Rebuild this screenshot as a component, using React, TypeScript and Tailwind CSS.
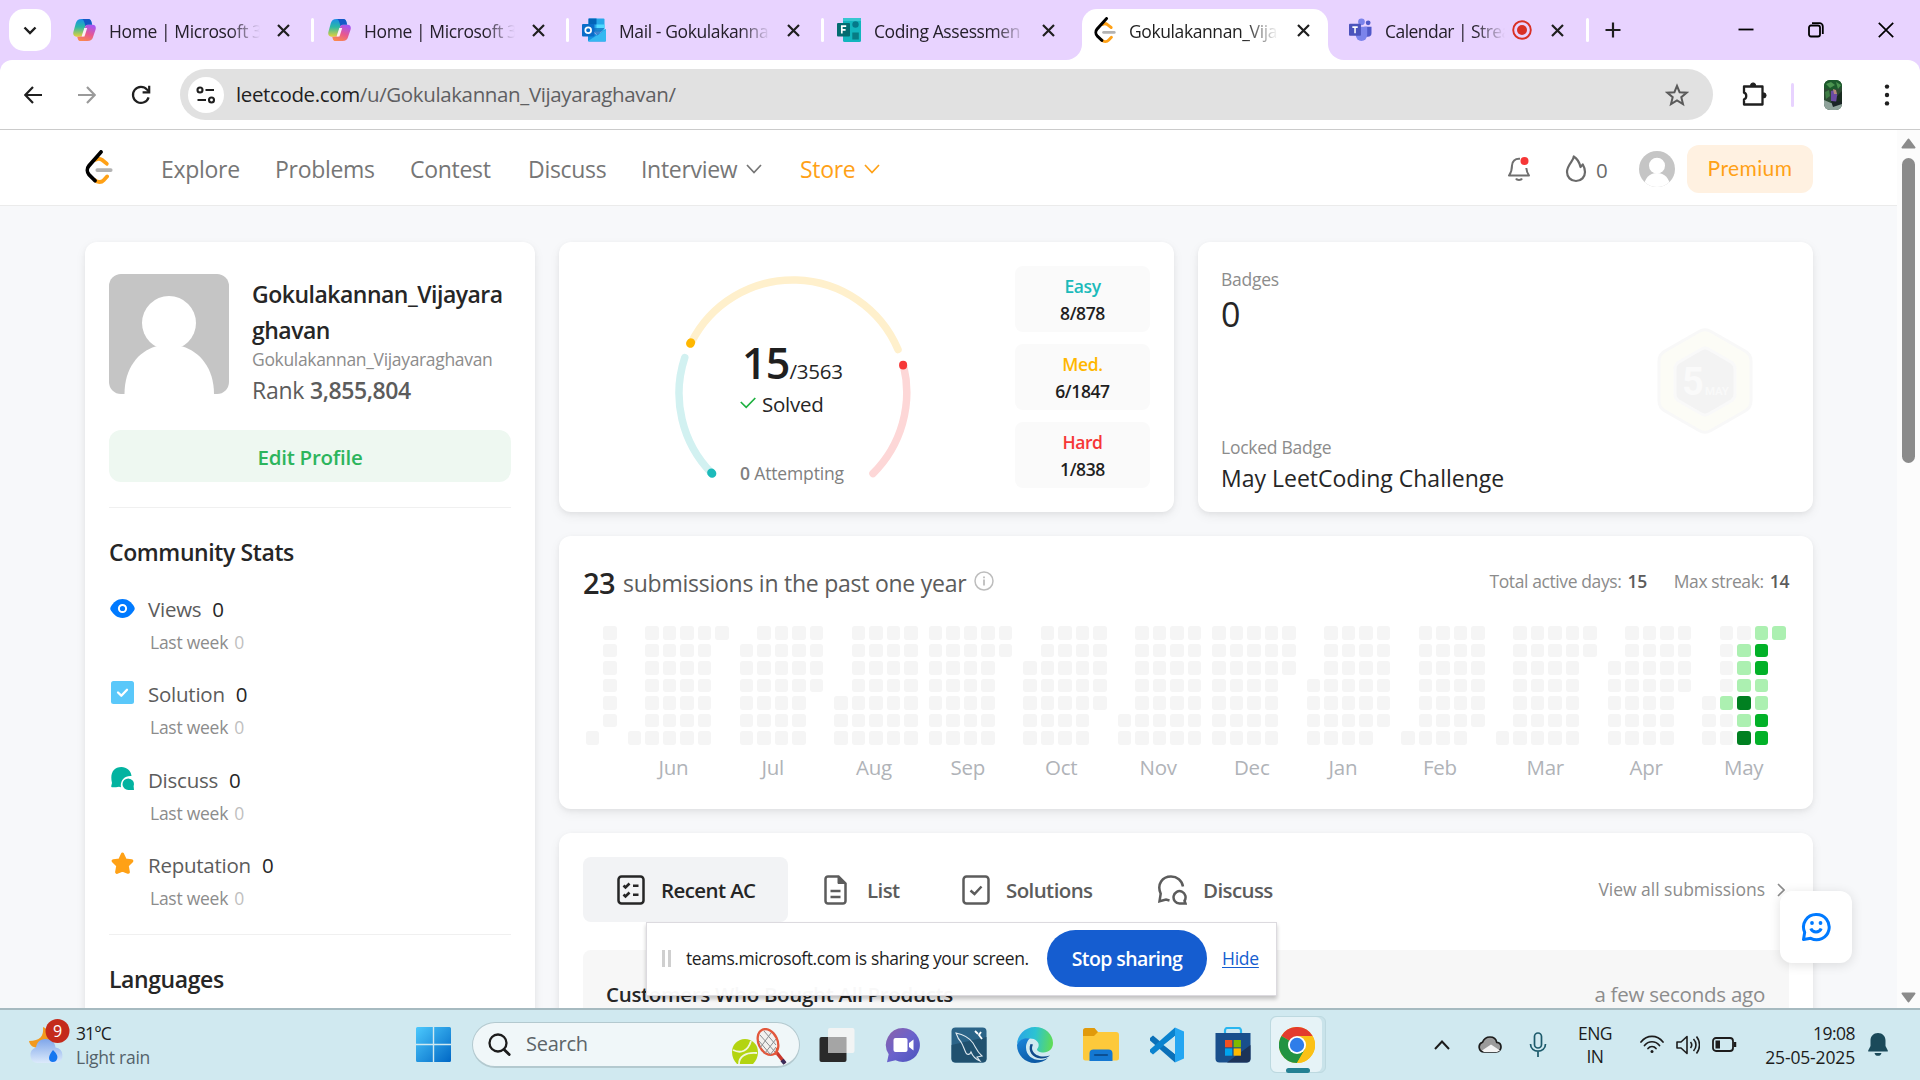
import React from 'react';

/* ---------- browser icons ---------- */

function CopilotIcon({ id }: { id: string }) {
  return (
    <svg viewBox="0 0 24 24" className="h-6 w-[23px] shrink-0">
      <defs>
        <linearGradient id={id + 'a'} x1="0" y1="0" x2="0" y2="1">
          <stop offset="0" stopColor="#1a8fe8" />
          <stop offset="0.45" stopColor="#2bb8a5" />
          <stop offset="1" stopColor="#e5d13a" />
        </linearGradient>
        <linearGradient id={id + 'b'} x1="0.6" y1="0" x2="0.2" y2="1">
          <stop offset="0" stopColor="#a855f0" />
          <stop offset="0.5" stopColor="#e8588f" />
          <stop offset="1" stopColor="#fb8b4a" />
        </linearGradient>
      </defs>
      <path d="M9 0.5h7.2c1.6 0 2.4 1 2.8 2.4l1 3.6h-4.300c-1.800 0-2.700 1-3.200 2.700L9.900 17c-.5 1.500-1.300 2-2.700 2H3.500C.6 19-.2 16.500.4 14L2.900 5C3.800 2 5.500.5 9 .5z" fill={`url(#${id}a)`} />
      <path d="M16.200.5c1.600 0 2.400 1 2.800 2.400l1 3.600h-4.300c-1.400 0-2.200.6-2.700 1.600L12 4.500C11.300 2 10.500.5 9 .5z" fill="#1558c7" />
      <path d="M15 23.500H7.900c-1.600 0-2.500-1-2.900-2.400L4.400 19h2.800c1.500 0 2.200-.6 2.700-2l2.700-8.200c.5-1.500 1.300-2.300 3-2.300h5c2.900 0 3.600 2.500 3 5L21 19c-.9 3-2.500 4.500-6 4.500z" fill={`url(#${id}b)`} />
      <path d="M11.800 10l3-.2-2.800 9-3.100.2z" fill="#fff" opacity=".9" />
    </svg>
  );
}

function OutlookIcon() {
  return (
    <svg viewBox="0 0 24 24" className="h-6 w-6 shrink-0">
      <rect x="6.5" y="0.5" width="16" height="13" rx="1" fill="#28a8ea" />
      <rect x="6.5" y="0.5" width="8" height="6" fill="#0364b8" />
      <rect x="14.5" y="6.5" width="8" height="6" fill="#50d9ff" />
      <path d="M6 11l9 6 9-6v11.500a1 1 0 0 1-1 1H7a1 1 0 0 1-1-1z" fill="#1490df" />
      <path d="M6 23l18-11.500V22.500a1 1 0 0 1-1 1H7z" fill="#35b8f1" />
      <path d="M12 14l3.500 3.500L22 11v-1H12z" fill="#1272c4" opacity=".8" />
      <rect x="0" y="6" width="12.5" height="12.5" rx="1" fill="#0a6cc9" />
      <circle cx="6.2" cy="12.2" r="2.9" fill="none" stroke="#fff" strokeWidth="1.7" />
    </svg>
  );
}

function FormsIcon() {
  return (
    <svg viewBox="0 0 24 24" className="h-6 w-6 shrink-0">
      <rect x="6" y="0" width="18" height="24" rx="1.5" fill="#12b5bd" />
      <rect x="6" y="0" width="18" height="3" fill="#37c6d0" />
      <circle cx="18.5" cy="6.5" r="3.2" fill="#05798a" />
      <rect x="15.3" y="14.5" width="6.5" height="7" fill="#077c84" />
      <rect x="0" y="5" width="13" height="13.5" rx="1" fill="#036c70" />
      <path d="M4.800 15.500V8.200h4.400M4.800 11.900h3.800" fill="none" stroke="#fff" strokeWidth="1.7" />
    </svg>
  );
}

function TeamsIcon() {
  return (
    <svg viewBox="0 0 24 24" className="h-6 w-[23px] shrink-0">
      <circle cx="20" cy="4.5" r="2.5" fill="#5059c9" />
      <path d="M16 8.500h7.500V15a4 4 0 0 1-4 4H17z" fill="#5059c9" />
      <circle cx="13" cy="3.5" r="3.5" fill="#7b83eb" />
      <path d="M7 8.500h12V17a6 6.500 0 0 1-12 0z" fill="#7b83eb" />
      <rect x="0" y="5.5" width="12.5" height="12.5" rx="1" fill="#4b53bc" />
      <path d="M3.500 9h5.600M6.300 9v6.300" stroke="#fff" strokeWidth="1.6" fill="none" />
    </svg>
  );
}

function LeetLogo({ className }: { className: string }) {
  return (
    <svg viewBox="1.5 0 21 24" preserveAspectRatio="none" className={className} fill="none" strokeWidth="2.75" strokeLinecap="round">
      <path d="M9.600 6.900c1.400-1 3.300-.9 4.700.1l3.600 2.700" stroke="#ffa116" />
      <path d="M10.700 14.200h10.100" stroke="#b3b3b3" />
      <path d="M9 21.300c1.900 1.800 4.800 1.700 6.600-.1l2.500-2.500" stroke="#ffa116" />
      <path d="M13.500 1.400L4.400 11.200c-1.600 1.800-1.500 4.500.1 6.200l4.500 4.200" stroke="#000" />
    </svg>
  );
}

function Close() {
  return (
    <svg viewBox="0 0 15 15" className="h-[15px] w-[15px] shrink-0" stroke="#1f1f1f" strokeWidth="2.2" fill="none">
      <path d="M2 2l11 11M13 2L2 13" />
    </svg>
  );
}

function Tab({ icon, title, sep = true }: { icon: React.ReactNode; title: string; sep?: boolean }) {
  return (
    <div className="flex h-[60px] w-[255px] shrink-0 items-center pl-3.5">
      <div className="flex w-[22px] shrink-0 justify-center">{icon}</div>
      <div className="ml-[14px] w-[151px] shrink-0 whitespace-nowrap pt-[2px] text-[17.5px] tracking-[-0.4px] text-[#25202b] [mask-image:linear-gradient(to_right,black_80%,transparent)]">
        {title}
      </div>
      <div className="ml-4 flex">
        <Close />
      </div>
      {sep && <div className="ml-5 h-6 w-[3px] rounded bg-white" />}
    </div>
  );
}

function TabStrip() {
  return (
    <div className="flex h-[60px] bg-white">
      <div className="flex w-[1082px] shrink-0 items-center rounded-br-[16px] bg-[#e8d3ff] pl-[9px]">
        <div className="mr-2 flex h-[42px] w-[42px] shrink-0 items-center justify-center rounded-[15px] bg-white">
          <svg viewBox="0 0 14 9" className="h-[9px] w-[14px]" fill="none" stroke="#1f1f1f" strokeWidth="2.4">
            <path d="M1.500 1.500L7 7l5.500-5.500" />
          </svg>
        </div>
        <Tab icon={<CopilotIcon id="c1" />} title="Home | Microsoft 3" />
        <Tab icon={<CopilotIcon id="c2" />} title="Home | Microsoft 3" />
        <Tab icon={<OutlookIcon />} title="Mail - Gokulakanna" />
        <Tab icon={<FormsIcon />} title="Coding Assessmen" sep={false} />
      </div>
      <div className="w-[246px] shrink-0 bg-[linear-gradient(#e8d3ff_50%,#fff_50%)] pt-[9px]">
        <div className="flex h-[51px] items-center rounded-t-[15px] bg-white pb-[9px] pl-3">
          <LeetLogo className="h-[26px] w-[22px] shrink-0" />
          <div className="ml-[13px] w-[149px] shrink-0 whitespace-nowrap pt-[2px] text-[17.5px] tracking-[-0.4px] text-[#1f1f1f] [mask-image:linear-gradient(to_right,black_78%,transparent)]">
            Gokulakannan_Vija
          </div>
          <div className="ml-[18px] flex">
            <Close />
          </div>
        </div>
      </div>
      <div className="flex min-w-0 flex-1 items-center rounded-bl-[16px] bg-[#e8d3ff] pl-[21px]">
        <TeamsIcon />
        <div className="ml-[13px] w-[120px] shrink-0 whitespace-nowrap pt-[2px] text-[17.5px] tracking-[-0.55px] text-[#25202b] [mask-image:linear-gradient(to_right,black_75%,transparent)]">
          Calendar | Strea
        </div>
        <svg viewBox="0 0 20 20" className="ml-[7px] h-5 w-5 shrink-0">
          <circle cx="10" cy="10" r="8.8" fill="none" stroke="#d93025" strokeWidth="1.9" />
          <circle cx="10" cy="10" r="5" fill="#d93025" />
        </svg>
        <div className="ml-[18px] flex">
          <Close />
        </div>
        <div className="ml-[21px] h-6 w-[3px] shrink-0 rounded bg-white" />
        <svg viewBox="0 0 16 16" className="ml-4 h-4 w-4 shrink-0" stroke="#1f1f1f" strokeWidth="2.2">
          <path d="M8 0.500v15M0.500 8h15" />
        </svg>
        <div className="ml-auto flex">
          <div className="flex w-[70px] justify-center">
            <svg viewBox="0 0 16 16" className="h-4 w-4" stroke="#000" strokeWidth="1.8">
              <path d="M0.500 7.500h15" />
            </svg>
          </div>
          <div className="flex w-[70px] justify-center">
            <svg viewBox="0 0 16 16" className="h-4 w-4" stroke="#000" strokeWidth="1.8" fill="none">
              <rect x="1" y="3.5" width="11" height="11" rx="2" />
              <path d="M4 1.200h7.500a3.300 3.300 0 0 1 3.300 3.300V12" />
            </svg>
          </div>
          <div className="flex w-[69px] justify-center">
            <svg viewBox="0 0 16 16" className="h-4 w-4" stroke="#000" strokeWidth="1.7">
              <path d="M0.800 0.800l14.400 14.400M15.200 0.800L0.800 15.200" />
            </svg>
          </div>
        </div>
      </div>
    </div>
  );
}

function Toolbar() {
  return (
    <div className="bg-[#e8d3ff]">
      <div className="flex h-[70px] items-center rounded-t-[12px] border-b border-[#cbcbcb] bg-white">
        <svg viewBox="0 0 18 18" className="ml-6 h-[18px] w-[18px] shrink-0" fill="none" stroke="#1f1f1f" strokeWidth="2.2">
          <path d="M18 9H1.500M9 1L1.300 9 9 17" />
        </svg>
        <svg viewBox="0 0 18 18" className="ml-9 h-[18px] w-[18px] shrink-0" fill="none" stroke="#9a9a9a" strokeWidth="2.2">
          <path d="M0 9h16.500M9 1l7.700 8L9 17" />
        </svg>
        <svg viewBox="0 0 20 20" className="ml-[35px] h-5 w-5 shrink-0" fill="none" stroke="#1f1f1f" strokeWidth="2.2">
          <path d="M17.600 12.300A8 8 0 1 1 16 4.600l2 2" />
          <path d="M18.200 0.800v6.600h-6.600" />
        </svg>
        <div className="ml-[29px] flex h-[51px] w-[1533px] shrink-0 items-center rounded-full bg-[#e1e1e1]">
          <div className="ml-2 flex h-9 w-9 items-center justify-center rounded-full bg-white">
            <svg viewBox="0 0 20 18" className="h-[18px] w-5" fill="none" stroke="#1f1f1f" strokeWidth="2.1">
              <circle cx="4" cy="4" r="2.5" />
              <path d="M9.500 4H18M1.500 14H10" />
              <circle cx="15.5" cy="14" r="2.5" />
            </svg>
          </div>
          <div className="ml-[12px] whitespace-nowrap text-[20.5px] tracking-[-0.37px] text-[#5f5f62]">
            <span className="text-[#1f1f1f]">leetcode.com</span>/u/Gokulakannan_Vijayaraghavan/
          </div>
          <svg viewBox="0 0 24 24" className="ml-auto mr-6 h-6 w-6" fill="none" stroke="#5a5a5a" strokeWidth="2">
            <path d="M12 2.800l2.600 6.400 7 .5-5.300 4.500 1.700 6.800L12 17.300l-6 3.700 1.700-6.800L2.400 9.700l7-.5z" />
          </svg>
        </div>
        <svg viewBox="0 0 26 26" className="ml-[28px] h-[26px] w-[26px] shrink-0" fill="none" stroke="#1f1f1f" strokeWidth="2.3" strokeLinejoin="round">
          <path d="M3 4.500h18.500v18H3v-5.200c3-.8 3-5.800 0-6.600z" />
          <path d="M9.500 3.500a2.600 2.600 0 0 1 5.200 0zM22.500 10.800a2.600 2.600 0 0 1 0 5.200z" fill="#1f1f1f" strokeWidth="1" />
        </svg>
        <div className="ml-6 h-6 w-[3px] rounded bg-[#e8d3ff]" />
        <svg viewBox="0 0 18 30" className="ml-[30px] h-[30px] w-[18px] shrink-0 rounded-[6px]">
          <rect width="18" height="30" fill="#2c4a33" />
          <path d="M0 0h18v7L9 10 0 8z" fill="#1c5a2c" />
          <path d="M2 4l5-2 4 3-5 3zM12 2l5 3-3 4z" fill="#4b934f" />
          <path d="M1 12l4-2 1 6-4 3z" fill="#3f7d45" />
          <path d="M7 11l4-1 3 7-2 6-5-2z" fill="#6b4aa3" />
          <path d="M9 9l3 1 1 4-3 0z" fill="#b58a7c" />
          <path d="M13 16l5-5v11l-6 1z" fill="#1a2b20" />
          <path d="M0 20l7 3 11 1v6H0z" fill="#8fa39b" />
          <path d="M7 21l11 1v2l-9 3z" fill="#1a2426" />
        </svg>
        <svg viewBox="0 0 6 22" className="ml-[42px] h-[22px] w-1.5 shrink-0" fill="#1f1f1f">
          <circle cx="3" cy="2.6" r="2.2" />
          <circle cx="3" cy="11" r="2.2" />
          <circle cx="3" cy="19.4" r="2.2" />
        </svg>
      </div>
    </div>
  );
}

/* ---------- page header ---------- */

function Chevron() {
  return (
    <svg viewBox="0 0 16 10" className="ml-[9px] h-[10px] w-4" fill="none" stroke="currentColor" strokeWidth="1.7">
      <path d="M1 1l7 7.500L15 1" />
    </svg>
  );
}

function SiteHeader() {
  return (
    <div className="flex h-[76px] items-center border-b border-[#ebebeb] bg-white pt-[3px]">
      <LeetLogo className="ml-[85px] mt-[-4px] h-[34px] w-[28px] shrink-0" />
      <div className="flex items-center whitespace-nowrap text-[23px] leading-9 tracking-[-0.3px] text-[#767676]">
        <span className="ml-12 w-[114px]">Explore</span>
        <span className="w-[135px]">Problems</span>
        <span className="w-[118px]">Contest</span>
        <span className="w-[113px]">Discuss</span>
        <span className="flex w-[159px] items-center">
          Interview
          <Chevron />
        </span>
        <span className="flex items-center text-[#ffa116]">
          Store
          <Chevron />
        </span>
      </div>
      <div className="ml-auto mr-[84px] flex items-center">
        <svg viewBox="0 0 24 26" className="h-[26px] w-6" fill="none" stroke="#6f6f6f" strokeWidth="2">
          <path d="M13 2.800C8 2.300 5 5.500 5 9.500c0 5-.8 7-3 10h20c-1.700-2.500-2.400-4-2.700-7.500" strokeLinejoin="round" />
          <path d="M9 22.500c1 2 5 2 6 0" strokeWidth="2.2" />
          <circle cx="17.5" cy="5" r="4" fill="#f63737" stroke="none" />
        </svg>
        <svg viewBox="0 0 22 28" className="ml-[34px] h-[28px] w-[22px]" fill="none" stroke="#6a6a6a" strokeWidth="2.2" strokeLinejoin="round">
          <path d="M8.700 1.500C9.100 5.500 2 9.500 2 17c0 5 3.700 9 9 9s9-4 9-9c0-2.500-.7-5-2.200-7.500l-2.300 2.500C14.600 8 12.800 4 8.700 1.500z" />
        </svg>
        <span className="ml-[9px] w-[12px] pt-[3px] text-[20.5px] text-[#6a6a6a]">0</span>
        <svg viewBox="0 0 36 36" className="ml-[31px] h-9 w-9">
          <defs>
            <clipPath id="av">
              <circle cx="18" cy="18" r="18" />
            </clipPath>
          </defs>
          <g clipPath="url(#av)">
            <rect width="36" height="36" fill="#c5c5c5" />
            <circle cx="18" cy="14.7" r="8" fill="#fff" />
            <path d="M4.600 38c0-9.500 5-16 13.400-16s13.400 6.500 13.400 16z" fill="#fff" />
          </g>
        </svg>
        <div className="ml-3 flex h-12 w-[126px] items-center justify-center rounded-[12px] bg-[#fff1e1] pb-[2px] font-[Lato] text-[21px] tracking-[0.4px] text-[#ffa116]">
          Premium
        </div>
      </div>
    </div>
  );
}

/* ---------- profile card ---------- */

const CARD = 'bg-white rounded-[12px] shadow-[0_2px_5px_rgba(0,0,0,0.050),0_4px_12px_rgba(0,0,0,0.060)]';

function Stat({ icon, label }: { icon: React.ReactNode; label: string }) {
  return (
    <div className="mb-[25.5px] h-[60px]">
      <div className="flex h-[30px] items-center">
        <div className="flex w-[27px] justify-center pb-0.5">{icon}</div>
        <span className="ml-3 text-[20.5px] text-[#5c5c5c]">{label}</span>
        <span className="ml-[11px] text-[20.5px] text-[#262626]">0</span>
      </div>
      <div className="mt-1.5 flex h-6 items-center pl-[41px] text-[17.5px] text-[#8c8c8c]">
        Last week<span className="ml-1.5 text-[#bfbfbf]">0</span>
      </div>
    </div>
  );
}

function ProfileCard() {
  return (
    <div className={'h-[900px] w-[450px] shrink-0 px-6 pt-8 ' + CARD}>
      <div className="flex h-[156px]">
        <svg viewBox="0 0 120 120" className="h-[120px] w-[120px] shrink-0 rounded-[12px]">
          <rect width="120" height="120" fill="#c5c5c5" />
          <circle cx="60" cy="49" r="27" fill="#fff" />
          <path d="M15.500 120c0-26 14-42.500 31-47.500h27c17 5 31.500 21.500 31.500 47.500z" fill="#fff" />
        </svg>
        <div className="ml-[23px] pt-[2px]">
          <div className="h-[71px] w-[260px] text-[23px] font-semibold leading-9 tracking-[-0.5px] text-[#262626]">
            Gokulakannan_Vijayara
            <br />
            ghavan
          </div>
          <div className="h-6 whitespace-nowrap text-[17.5px] leading-6 tracking-[-0.33px] text-[#8c8c8c]">Gokulakannan_Vijayaraghavan</div>
          <div className="mt-[1px] h-9 whitespace-nowrap text-[23px] leading-9 text-[#5c5c5c]">
            Rank <span className="font-semibold tracking-[-0.4px]">3,855,804</span>
          </div>
        </div>
      </div>
      <div className="flex h-[52px] items-center justify-center rounded-[12px] bg-[#eef8f1] pt-0.5 text-[20.5px] font-semibold text-[#2db55d]">
        Edit Profile
      </div>
      <div className="mt-[25px] h-px bg-[#f0f0f0]" />
      <div className="mb-6 mt-[26px] text-[23px] font-semibold leading-9 tracking-[-0.4px] text-[#262626]">Community Stats</div>
      <Stat
        label="Views"
        icon={
          <svg viewBox="0 0 25 19" className="h-[19px] w-[25px]">
            <path d="M12.500 0c5.500 0 9 3.300 11.700 7.700.7 1.200.7 2.400 0 3.600C21.500 15.700 18 19 12.500 19S3.500 15.700.8 11.300c-.7-1.200-.7-2.400 0-3.600C3.500 3.300 7 0 12.500 0z" fill="#007aff" />
            <circle cx="12.5" cy="9.5" r="3.6" fill="none" stroke="#fff" strokeWidth="2" />
          </svg>
        }
      />
      <Stat
        label="Solution"
        icon={
          <svg viewBox="0 0 23 23" className="mb-0.5 h-[23px] w-[23px]">
            <rect width="23" height="23" rx="2.5" fill="#5ac8fa" />
            <path d="M7 11.500l3.300 3.200 5.700-5.900" fill="none" stroke="#fff" strokeWidth="2.3" strokeLinecap="round" strokeLinejoin="round" />
          </svg>
        }
      />
      <Stat
        label="Discuss"
        icon={
          <svg viewBox="0 0 23 23" className="mb-0.5 h-[23px] w-[23px]" fill="#02b3a0">
            <path d="M10.500 0c5 0 9.500 3.700 10 9-6-.8-10.800 3.700-10.700 9.500 0 .5.100 1.200.2 1.700L8 19.700l-3 .6H1.500c-1 0-1.500-.6-1.200-1.600L1 16C-1.200 7 2 0 10.500 0z" />
            <path d="M17.300 11.400a5.700 5.700 0 0 1 5.300 7.600l.4 4h-5.700a5.800 5.800 0 0 1 0-11.600z" />
          </svg>
        }
      />
      <Stat
        label="Reputation"
        icon={
          <svg viewBox="0 0 24 23" className="mb-0.5 h-[23px] w-[23px]">
            <path d="M12 2l2.800 6 6.700.9-4.800 4.700 1.200 6.900L12 18.100l-5.900 2.400 1.200-6.900L2.500 8.900 9.200 8z" fill="#ffa116" stroke="#ffa116" strokeWidth="3.6" strokeLinejoin="round" />
          </svg>
        }
      />
      <div className="mt-[-2px] h-px bg-[#f0f0f0]" />
      <div className="mt-[26px] text-[23px] font-semibold leading-9 tracking-[-0.4px] text-[#262626]">Languages</div>
    </div>
  );
}

/* ---------- solved card ---------- */

function Level({ name, value, color }: { name: string; value: string; color: string }) {
  return (
    <div className="flex h-[66px] w-[135px] flex-col items-center rounded-[8px] bg-[#fafafa] pt-[7px] text-[17.5px] font-semibold leading-[27px] tracking-[-0.4px]">
      <div className={color}>{name}</div>
      <div className="text-[#1f1f1f]">{value}</div>
    </div>
  );
}

function SolvedCard() {
  return (
    <div className={'flex h-[270px] w-[615px] shrink-0 ' + CARD}>
      <div className="relative ml-[114px] mt-[31px] h-[220px] w-[240px]">
        <svg viewBox="673 273 240 220" className="h-[220px] w-[240px]" fill="none" strokeWidth="7.5" strokeLinecap="round">
          <path d="M712 473.500A114 114 0 0 1 684.800 357.500" stroke="#d2f1f1" />
          <path d="M690.800 343.500A114 114 0 0 1 898 349.500" stroke="#fff0cc" />
          <path d="M903.500 365.500A114 114 0 0 1 873 473.500" stroke="#fdd7d7" />
          <path d="M711.400 472.800l.7.700" stroke="#1cbaba" strokeWidth="8.5" />
          <path d="M690.300 343.600l.6-1.100" stroke="#ffb700" strokeWidth="8.5" />
          <path d="M903.100 364.800v.6" stroke="#f63737" strokeWidth="8" />
        </svg>
        <div className="absolute left-[67px] top-[60px] w-[160px] whitespace-nowrap">
          <div className="flex items-baseline pl-[2px] leading-[60px] text-[#1f1f1f]">
            <span className="text-[43px] font-semibold tracking-[-0.8px]">15</span>
            <span className="text-[20.5px] text-[#262626]">/3563</span>
          </div>
          <div className="mt-[-12px] flex items-center text-[20.5px] leading-[30px] text-[#262626]">
            <svg viewBox="0 0 16 12" className="mb-0.5 mr-1.5 h-3 w-4" fill="none" stroke="#1fb141" strokeWidth="1.7">
              <path d="M0.800 5l5.400 5.300L15.300 1" />
            </svg>
            Solved
          </div>
          <div className="mt-[40px] text-[17.5px] leading-7 tracking-[-0.15px] text-[#808080]">
            <span className="font-semibold">0</span> Attempting
          </div>
        </div>
      </div>
      <div className="ml-[102px] flex flex-col gap-3 pt-6">
        <Level name="Easy" value="8/878" color="text-[#1cbaba]" />
        <Level name="Med." value="6/1847" color="text-[#ffb700]" />
        <Level name="Hard" value="1/838" color="text-[#f63737]" />
      </div>
    </div>
  );
}

function BadgeCard() {
  return (
    <div className={'flex h-[270px] w-[615px] shrink-0 justify-between pl-[23px] ' + CARD}>
      <div className="whitespace-nowrap">
        <div className="mt-[22px] text-[17.5px] leading-[30px] text-[#8c8c8c]">Badges</div>
        <div className="text-[34px] leading-[40px] text-[#262626]">0</div>
        <div className="mt-[98px] text-[17.5px] leading-[30px] text-[#8c8c8c]">Locked Badge</div>
        <div className="mt-[-2px] text-[23px] leading-9 tracking-[0px] text-[#262626]">May LeetCoding Challenge</div>
      </div>
      <svg viewBox="0 0 96 106" className="mr-[60px] mt-[86px] h-[106px] w-24">
        <path d="M42 3.500Q48 0 54 3.500L88 23q6 3.500 6 10v40q0 6.500-6 10L54 102.500q-6 3.500-12 0L8 83q-6-3.500-6-10V33q0-6.500 6-10z" fill="#fcfcf6" stroke="#f8f8f8" strokeWidth="3" />
        <path d="M44.500 21q3.500-2 7 0L74 34q4 2.500 4 7v25q0 4.500-4 7L51.500 86q-3.500 2-7 0L22 73q-4-2.500-4-7V41q0-4.500 4-7z" fill="#f3f3f3" stroke="#f9f9f9" strokeWidth="3" />
        <text x="25" y="67" fontSize="38" fontWeight="700" fill="#fafafa" fontFamily="Roboto, sans-serif">5</text>
        <text x="48" y="67" fontSize="11.5" fontWeight="700" fill="#f9f9f9" fontFamily="Roboto, sans-serif">MAY</text>
      </svg>
    </div>
  );
}

/* ---------- activity calendar ---------- */

type Month = { label: string; start: number; days: number; level?: Record<number, number> };

const MONTHS: Month[] = [
  { label: '', start: 6, days: 7 },
  { label: 'Jun', start: 6, days: 30 },
  { label: 'Jul', start: 1, days: 31 },
  { label: 'Aug', start: 4, days: 31 },
  { label: 'Sep', start: 0, days: 30 },
  { label: 'Oct', start: 2, days: 31 },
  { label: 'Nov', start: 5, days: 30 },
  { label: 'Dec', start: 0, days: 31 },
  { label: 'Jan', start: 3, days: 31 },
  { label: 'Feb', start: 6, days: 28 },
  { label: 'Mar', start: 6, days: 31 },
  { label: 'Apr', start: 2, days: 30 },
  {
    label: 'May',
    start: 4,
    days: 25,
    level: { 8: 1, 12: 1, 13: 1, 14: 1, 15: 3, 16: 1, 17: 3, 18: 1, 19: 2, 20: 2, 21: 1, 22: 1, 23: 2, 24: 2, 25: 1 },
  },
];

const LEVELS = ['bg-[#f5f5f5]', 'bg-[#acf0b1]', 'bg-[#02b128]', 'bg-[#018021]'];

function MonthGrid({ m }: { m: Month }) {
  const cells = Array.from({ length: m.start + m.days }, (_, i) => i - m.start + 1);
  const wide = cells.length > 35;
  return (
    <div className="flex flex-col">
      <div className="grid grid-flow-col grid-rows-7 gap-1">
        {cells.map((d, i) => (
          <div key={i} className={'h-[13.5px] w-[13.5px] rounded-[3px] ' + (d < 1 ? '' : LEVELS[m.level?.[d] ?? 0])} />
        ))}
      </div>
      <div className={'mt-[7px] h-[30px] text-[20.5px] leading-[30px] text-[#b0b3b8] ' + (wide ? 'pl-[31px]' : 'pl-[22px]')}>{m.label}</div>
    </div>
  );
}

function CalendarCard() {
  return (
    <div className={'h-[273px] w-[1254px] px-6 pt-[27px] ' + CARD}>
      <div className="flex h-[40px] items-center whitespace-nowrap">
        <span className="w-[40px] text-[29px] font-semibold tracking-[-0.5px] text-[#262626]">23</span>
        <span className="text-[23px] tracking-[-0.25px] text-[#5c5c5c]">submissions in the past one year</span>
        <svg viewBox="0 0 20 20" className="mb-1 ml-2 h-5 w-5" fill="none" stroke="#bdbdbd" strokeWidth="1.5">
          <circle cx="10" cy="10" r="9" />
          <path d="M10 8.500v6M10 5.500v1.700" strokeWidth="1.8" />
        </svg>
        <div className="ml-auto flex pb-[3px] text-[17.5px] tracking-[-0.4px] text-[#8c8c8c]">
          <span>
            Total active days: <span className="ml-0.5 font-semibold text-[#5c5c5c]">15</span>
          </span>
          <span className="ml-[27px]">
            Max streak: <span className="ml-0.5 font-semibold text-[#5c5c5c]">14</span>
          </span>
        </div>
      </div>
      <div className="mt-[23px] flex gap-[11px] pl-[2.5px]">
        {MONTHS.map((m, i) => (
          <MonthGrid key={i} m={m} />
        ))}
      </div>
    </div>
  );
}

/* ---------- recent submissions ---------- */

const stroke = { fill: 'none', stroke: 'currentColor', strokeWidth: 2.5 } as const;

function RecentCard() {
  return (
    <div className={'h-[400px] w-[1254px] px-6 pt-6 ' + CARD}>
      <div className="flex h-[65px] items-center whitespace-nowrap text-[20.5px] font-semibold tracking-[-0.6px] text-[#5c5c5c]">
        <div className="flex h-[65px] w-[205px] items-center rounded-[8px] bg-[#f2f3f5] pl-[34px] text-[#262626]">
          <svg viewBox="0 0 28 30" className="mr-4 h-[30px] w-7" {...stroke}>
            <rect x="1.5" y="1.5" width="25" height="27" rx="3" />
            <path d="M6.500 10.500l2 2 4-4M6.500 19.500l2 2 4-4M16 10.800h5.500M16 19.800h5.500" strokeWidth="2.6" />
          </svg>
          <span className="pt-0.5">Recent AC</span>
        </div>
        <div className="flex items-center pl-9">
          <svg viewBox="0 0 23 30" className="mr-5 h-[30px] w-[23px]" {...stroke}>
            <path d="M14.500 1.500H4a2.500 2.500 0 0 0-2.500 2.500v22A2.500 2.500 0 0 0 4 28.500h15a2.500 2.500 0 0 0 2.500-2.500V8.500z" />
            <path d="M14 1.500v7h7.500z" fill="currentColor" strokeWidth="1" />
            <path d="M6.500 16h10M6.500 22h10" />
          </svg>
          <span className="w-[95px] pt-0.5">List</span>
          <svg viewBox="0 0 28 30" className="mr-4 h-[30px] w-7" {...stroke}>
            <rect x="1.5" y="1.5" width="25" height="27" rx="3" />
            <path d="M8.500 15.500l4 3.500 7-7.500" />
          </svg>
          <span className="w-[151px] pt-0.5">Solutions</span>
          <svg viewBox="0 0 30 30" className="mr-4 h-[30px] w-[30px]" {...stroke}>
            <path d="M12.500 25.500L9 24.500l-6.500 1.700 1.200-7.500C-.5 9 5.500 1.500 14 1.500c6 0 11 3.800 12 10" />
            <path d="M28.500 28.500h-6a6 6.200 0 1 1 5-2.700z" />
          </svg>
          <span className="pt-0.5">Discuss</span>
        </div>
        <div className="ml-auto mr-1 flex items-center text-[17.5px] font-normal tracking-[-0.02px] text-[#8c8c8c]">
          View all submissions
          <svg viewBox="0 0 8 14" className="ml-3 h-3.5 w-2" fill="none" stroke="#8c8c8c" strokeWidth="1.6">
            <path d="M1 1l6 6-6 6" />
          </svg>
        </div>
      </div>
      <div className="mt-7 flex h-[84px] items-center justify-between whitespace-nowrap rounded-[8px] bg-[#f7f7f7] px-6 pt-1">
        <span className="ml-[-1px] text-[20.5px] font-semibold tracking-[-0.32px] text-[#262626]">Customers Who Bought All Products</span>
        <span className="text-[20.5px] text-[#8c8c8c]">a few seconds ago</span>
      </div>
    </div>
  );
}

function SharingBar() {
  return (
    <div className="absolute left-[646px] top-[792px] flex h-[74px] w-[631px] items-center whitespace-nowrap border border-[#dcdadf] bg-white/97 pb-[1px] shadow-[0_3px_4px_rgba(0,0,0,0.220)]">
      <div className="ml-[15px] flex gap-[3px]">
        <div className="h-[17px] w-[3px] bg-[#cfcfcf]" />
        <div className="h-[17px] w-[3px] bg-[#cfcfcf]" />
      </div>
      <span className="ml-[15px] w-[361px] text-[17.5px] tracking-[-0.4px] text-[#1f1f1f]">teams.microsoft.com is sharing your screen.</span>
      <div className="flex h-[57px] w-[160px] items-center justify-center rounded-full bg-[#155dd0] text-[19.5px] font-semibold tracking-[-0.6px] text-white">
        Stop sharing
      </div>
      <span className="ml-[15px] text-[17.5px] text-[#155dd0] underline underline-offset-2">Hide</span>
    </div>
  );
}

function FeedbackButton() {
  return (
    <div className="absolute left-[1780px] top-[761px] flex h-[72px] w-[72px] items-center justify-center rounded-[12px] bg-white shadow-[0_2px_12px_rgba(0,0,0,0.120)]">
      <svg viewBox="0 0 30 30" className="h-[30px] w-[30px]" fill="none" stroke="#007aff" strokeWidth="3">
        <path d="M15.500 2.500A12.600 12.600 0 1 1 9.800 26.300L2.500 27.500l1.200-7.200A12.500 12.500 0 0 1 15.500 2.500z" strokeLinejoin="round" />
        <path d="M9.800 16.500c1.800 4.600 8.600 4.600 10.400 0" />
        <circle cx="11" cy="11" r="1.9" fill="#007aff" stroke="none" />
        <circle cx="19.5" cy="11" r="1.9" fill="#007aff" stroke="none" />
      </svg>
    </div>
  );
}

function ScrollTrack() {
  return (
    <div className="flex h-[878px] w-[23px] shrink-0 flex-col items-center bg-[#fcfcfc] pt-2">
      <svg viewBox="0 0 15 11" className="h-[11px] w-[15px]">
        <path d="M7.500 1.500l6 8h-12z" fill="#8b8b8b" stroke="#8b8b8b" strokeWidth="2" strokeLinejoin="round" />
      </svg>
      <div className="mt-[9px] h-[305px] w-[13px] rounded-full bg-[#8b8b8b]" />
      <svg viewBox="0 0 15 11" className="mb-[5px] mt-auto h-[11px] w-[15px]">
        <path d="M7.500 9.500l6-8h-12z" fill="#8b8b8b" stroke="#8b8b8b" strokeWidth="2" strokeLinejoin="round" />
      </svg>
    </div>
  );
}

/* ---------- taskbar ---------- */

function WeatherIcon() {
  return (
    <svg viewBox="0 0 42 44" className="h-11 w-[42px] shrink-0">
      <defs>
        <linearGradient id="cl" x1="0" y1="0" x2="0" y2="1">
          <stop offset="0" stopColor="#7fa6ea" />
          <stop offset="1" stopColor="#dceafb" />
        </linearGradient>
      </defs>
      <path d="M14 8c1 9-3 14-14 14 1 5 5 7 10 7 8 0 12-7 10-13-1-4-3-7-6-8z" fill="#f39a1e" />
      <path d="M8 44a8 8 0 0 1-1-15.500C8 22 12 20 17 20s9 3 9.500 8.500A8 8 0 0 1 28 44z" fill="url(#cl)" />
      <path d="M24 31c4 4 6 7 3 11-3 2-7 1-7-3 0-3 2-5 4-8z" fill="#1677f0" />
      <circle cx="28.5" cy="12" r="12" fill="#c42b1c" />
      <text x="28.5" y="18" textAnchor="middle" fontSize="16" fill="#fff" fontFamily="Open Sans, sans-serif">9</text>
    </svg>
  );
}

function Task({ children }: { children: React.ReactNode }) {
  return <div className="flex w-[66px] shrink-0 items-center justify-center">{children}</div>;
}

function Taskbar() {
  return (
    <div className="flex h-[72px] items-center border-t-2 border-[#a6bac0] bg-[#d0e9f0] pb-[1px]">
      <div className="ml-[29px] flex w-[387px] items-center">
        <div className="mb-2">
          <WeatherIcon />
        </div>
        <div className="ml-[5px] whitespace-nowrap text-[17.5px] leading-6 text-[#1c1c1c]">
          <div className="tracking-[-0.9px]">31°C</div>
          <div className="text-[#54626a]">Light rain</div>
        </div>
      </div>
      <svg viewBox="0 0 35 35" className="h-[35px] w-[35px] shrink-0">
        <defs>
          <linearGradient id="win" x1="0" y1="0" x2="1" y2="1">
            <stop offset="0" stopColor="#4cc9fd" />
            <stop offset="1" stopColor="#0067c5" />
          </linearGradient>
        </defs>
        <path d="M1.500 0h15.300v16.800H0V1.500A1.500 1.500 0 0 1 1.500 0zM18.200 0h15.300A1.500 1.500 0 0 1 35 1.500v15.300H18.200zM0 18.200h16.800V35H1.500A1.500 1.500 0 0 1 0 33.500zM18.200 18.200H35v15.300a1.500 1.500 0 0 1-1.500 1.500H18.200z" fill="url(#win)" />
      </svg>
      <div className="ml-[21px] flex h-[46px] w-[328px] shrink-0 items-center rounded-full border border-b-2 border-[#b3c9cf] bg-[#f0f7f9]">
        <svg viewBox="0 0 23 23" className="ml-[15px] h-[23px] w-[23px]" fill="none" stroke="#1c1c1c" strokeWidth="2.3" strokeLinecap="round">
          <circle cx="10" cy="10" r="8.5" />
          <path d="M16 16.500l5.200 5" strokeWidth="2.8" />
        </svg>
        <span className="ml-[15px] text-[20px] text-[#5c6468]">Search</span>
        <svg viewBox="0 0 55 37" className="ml-auto mr-[12px] mt-1 h-[37px] w-[55px]">
          <path d="M45 25l7 9" stroke="#c9372c" strokeWidth="3.5" strokeLinecap="round" />
          <path d="M50 32l3 3.500" stroke="#3b2c5a" strokeWidth="4" />
          <ellipse cx="36" cy="14" rx="9.5" ry="13.5" transform="rotate(-25 36 14)" fill="#f2f0ef" stroke="#e2573c" strokeWidth="2.3" />
          <path d="M28 7l15 17M32 3l12 14M27 13l11 13M28 20l11-15M33 25l11-14M38 27l6-8" stroke="#8b8d90" strokeWidth="1" />
          <path d="M44 27l1-7" stroke="#e2573c" strokeWidth="2" />
          <path d="M0 24a13 13 0 0 1 26 0c0 5-2 9-5 12H5c-3-3-5-7-5-12z" fill="#b3d410" />
          <path d="M1 22c8 4 15 1 18-9M7 36c0-7 6-12 18-11" fill="none" stroke="#f1f7dc" strokeWidth="1.8" />
        </svg>
      </div>
      <div className="ml-[4px] flex">
        <Task>
          <svg viewBox="0 0 36 36" className="h-9 w-9">
            <rect x="0.5" y="10" width="27" height="25" rx="2" fill="#2a2a2a" />
            <rect x="9" y="1" width="26.5" height="25" rx="2" fill="#f4f4f4" opacity=".93" />
            <rect x="9" y="10" width="18.5" height="16" fill="#a5a5a5" />
          </svg>
        </Task>
        <Task>
          <svg viewBox="0 0 36 36" className="h-9 w-9">
            <defs>
              <linearGradient id="chat" x1="0" y1="0" x2="1" y2="1">
                <stop offset="0" stopColor="#8d62a8" />
                <stop offset="0.5" stopColor="#6a62cc" />
                <stop offset="1" stopColor="#4b53bc" />
              </linearGradient>
            </defs>
            <path d="M18 1a17 17 0 1 1-7.500 32.300L2 35.300l1.700-8A17 17 0 0 1 18 1z" fill="url(#chat)" />
            <rect x="8.5" y="11" width="14" height="14" rx="2" fill="#fff" />
            <path d="M24 16l4.500-3.500v11L24 20z" fill="#fff" />
          </svg>
        </Task>
        <Task>
          <svg viewBox="0 0 36 36" className="h-9 w-9">
            <rect x="0.5" y="0.5" width="35" height="35" rx="4" fill="#2b6488" />
            <path d="M.5 18L35.500 10v21.500a4 4 0 0 1-4 4h-27a4 4 0 0 1-4-4z" fill="#20516f" />
            <path d="M5 6c5 1 12 3 17 10 3 5 4 9 9 13l-5 1 3 4c-5-2-7-4-9-9-1 3-4 3-5 1-2-4-3-8-5-11C7 12 6 9 5 6z" fill="none" stroke="#dfe9ef" strokeWidth="1.1" />
            <path d="M24 4l3 3M31 12l-3-4 2-3" stroke="#fff" strokeWidth="1.8" fill="none" />
          </svg>
        </Task>
        <Task>
          <svg viewBox="0 0 36 36" className="h-9 w-9">
            <defs>
              <linearGradient id="e1" x1="0" y1="0.3" x2="1" y2="0.4">
                <stop offset="0" stopColor="#2aa4e6" />
                <stop offset="0.5" stopColor="#2cc3d2" />
                <stop offset="1" stopColor="#5fdc57" />
              </linearGradient>
              <linearGradient id="e2" x1="0" y1="0" x2="0.5" y2="1">
                <stop offset="0" stopColor="#1a86dc" />
                <stop offset="1" stopColor="#0c59a4" />
              </linearGradient>
            </defs>
            <path d="M0 18C0 8 8 0 18 0c10.500 0 18 7.500 18 16 0 6-4.500 9.500-9.500 9.500-4 0-6.500-1.500-6.500-3 0-1 1.700-1.700 1.700-4.500 0-3-3-6.500-8.700-6.500C6 11.500 1 14 0 18z" fill="url(#e1)" />
            <path d="M0 18c1.500-5 7-7.500 13-6.500-2 1-4 5-4 9 0 8 7 13 15 12.500 3-.3 5-1 7-2.200C28 34 23.500 36 18 36 8 36 0 28 0 18z" fill="url(#e2)" />
            <path d="M13.500 17c-3 7 2 14 10 14.500 4 .3 7-1 9.500-3-8 2.700-15.500 0-17.500-5-.8-2.200-.5-4 .5-6z" fill="#114a8b" />
          </svg>
        </Task>
        <Task>
          <svg viewBox="0 0 36 34" className="h-[34px] w-9">
            <path d="M0 2.500A2.500 2.500 0 0 1 2.500 0h9L15 4v6H0z" fill="#e19a0b" />
            <path d="M0 8h11l4-4h18a3 3 0 0 1 3 3v23a2.500 2.500 0 0 1-2.500 2.500h-31A2.500 2.500 0 0 1 0 30z" fill="#fdc93b" />
            <path d="M6.500 33v-7.500a4 4 0 0 1 4-4h15a4 4 0 0 1 4 4V33z" fill="#1478d2" />
            <path d="M12 27h12" stroke="#0b4f93" strokeWidth="2.2" strokeLinecap="round" />
          </svg>
        </Task>
        <Task>
          <svg viewBox="0 0 36 36" className="h-9 w-9">
            <path d="M26 0.500l9 4V31.500l-9 4z" fill="#24a6f2" />
            <path d="M1 11l3-2.500 22 18.500v8.500L1 13.500z" fill="#0b70b8" />
            <path d="M1 25l3 2.500L26 9V.5L1 22.500z" fill="#0a83cf" />
            <path d="M26 9v18l-11.500-9z" fill="#d0e9f0" />
          </svg>
        </Task>
        <Task>
          <svg viewBox="0 0 36 36" className="h-9 w-9">
            <path d="M10 8V3.500A2.500 2.500 0 0 1 12.500 1h11A2.500 2.500 0 0 1 26 3.500V8" fill="none" stroke="#29b6f0" strokeWidth="2.2" />
            <path d="M0.500 6h35v25.500a4 4 0 0 1-4 4h-27a4 4 0 0 1-4-4z" fill="#194f8c" />
            <path d="M35.500 18v13.500a4 4 0 0 1-4 4H12z" fill="#1d3358" />
            <rect x="10" y="13" width="7.3" height="7.3" fill="#f25022" />
            <rect x="18.6" y="13" width="7.3" height="7.3" fill="#7fba00" />
            <rect x="10" y="21.4" width="7.3" height="7.3" fill="#00a4ef" />
            <rect x="18.6" y="21.4" width="7.3" height="7.3" fill="#ffb900" />
          </svg>
        </Task>
        <div className="relative ml-[4px] flex h-[57px] w-[56px] items-center justify-center rounded-[6px] border border-[#bdd9e0] bg-[#c9e3ea] pr-[2px]">
          <div className="absolute inset-y-0 left-0 w-[51px] rounded-[6px] bg-[#e6f3f7]" />
          <svg viewBox="0 0 36 36" className="relative h-9 w-9">
            <circle cx="18" cy="18" r="18" fill="#fbc116" />
            <path d="M18 18L2.400 9A18 18 0 0 1 33.600 9z" fill="#e33b2e" />
            <path d="M2.400 9A18 18 0 0 0 18 36l7.800-13.500L18 18z" fill="#229342" />
            <path d="M18 9h15.600A18 18 0 0 1 18 36l7.800-13.500z" fill="#fbc116" />
            <circle cx="18" cy="18" r="9" fill="#fff" />
            <circle cx="18" cy="18" r="7.2" fill="#2f7de9" />
          </svg>
          <div className="absolute bottom-[-1px] left-[15px] h-[5px] w-6 rounded-full bg-[#238093]" />
        </div>
      </div>
      <div className="ml-auto mr-8 flex items-center whitespace-nowrap text-[#1c1c1c]">
        <svg viewBox="0 0 16 10" className="h-[10px] w-4" fill="none" stroke="#1c1c1c" strokeWidth="2">
          <path d="M1 9l7-7.500L15 9" />
        </svg>
        <svg viewBox="0 0 24 17" className="ml-7 h-[17px] w-6">
          <path d="M6 16a5 5 0 0 1-1.500-9.700C6 2.500 9 1 12 1s6 1.700 6.700 5.300C22 6.500 23 9 23 11s-1.500 5-5 5z" fill="#9b9b9b" stroke="#1c1c1c" strokeWidth="1.7" />
          <path d="M4 14.500l9-6 9 6-3 1.500H6z" fill="#f3f3f3" />
        </svg>
        <svg viewBox="0 0 18 26" className="ml-[27px] h-[26px] w-[18px]" fill="none" stroke="#1c5a6b" strokeWidth="1.7">
          <rect x="5.5" y="1" width="7" height="15" rx="3.5" />
          <path d="M1.500 12c0 9.500 15 9.500 15 0M9 19.500V25" />
        </svg>
        <div className="ml-[30px] w-[36px] text-center text-[17.5px] leading-[23px] tracking-[-0.5px]">
          ENG
          <br />
          IN
        </div>
        <svg viewBox="0 0 24 19" className="ml-[27px] h-[19px] w-6" fill="none" stroke="#1c1c1c" strokeWidth="1.7" strokeLinecap="round">
          <path d="M1 7c6-7.500 16-7.500 22 0M4.500 10.500c4-5 11-5 15 0M8 13.500c2-2.700 6-2.700 8 0" />
          <circle cx="12" cy="16.5" r="1.5" fill="#1c1c1c" stroke="none" />
        </svg>
        <svg viewBox="0 0 24 20" className="ml-3 h-5 w-6" fill="none" stroke="#1c1c1c" strokeWidth="1.6" strokeLinejoin="round">
          <path d="M1 7v6h4l6 5.500V1.500L5 7zM14.500 7c1.500 1.800 1.500 4.200 0 6M17.500 4c3.300 3.500 3.300 8.500 0 12M20.500 1.500c4 5 4 12 0 17" />
        </svg>
        <svg viewBox="0 0 25 15" className="ml-3 h-[15px] w-[25px]" fill="none" stroke="#1c1c1c" strokeWidth="1.8">
          <rect x="1" y="1" width="20" height="13" rx="3" />
          <path d="M23 5v5" strokeWidth="2.5" />
          <rect x="3.5" y="3.5" width="4.5" height="8" fill="#1c1c1c" stroke="none" />
        </svg>
        <div className="ml-[24px] flex w-[94px] flex-col items-end text-[17.5px] leading-6">
          <div className="tracking-[-0.5px]">19:08</div>
          <div className="tracking-[-0.15px]">25-05-2025</div>
        </div>
        <svg viewBox="0 0 20 23" className="ml-[13px] h-[23px] w-5" fill="#1b4a5a">
          <path d="M10 0c4.500 0 7.500 3.200 7.500 7.500V13l2.300 4.500v1H.2v-1L2.500 13V7.500C2.500 3.200 5.500 0 10 0zM6.500 20h7c-.5 2-1.700 2.800-3.500 2.800S7 22 6.500 20z" />
        </svg>
      </div>
    </div>
  );
}

export default function App() {
  return (
    <div className="h-[1080px] w-[1920px] overflow-hidden font-['Open_Sans','Noto_Sans',sans-serif] tracking-[-0.25px]">
      <TabStrip />
      <Toolbar />
      <div className="relative flex h-[878px] overflow-hidden">
        <div className="min-w-0 flex-1 bg-[#f7f8fa]">
          <SiteHeader />
          <div className="flex gap-6 pl-[85px] pt-[36px]">
            <ProfileCard />
            <div className="flex flex-col gap-6">
              <div className="flex gap-6">
                <SolvedCard />
                <BadgeCard />
              </div>
              <CalendarCard />
              <RecentCard />
            </div>
          </div>
        </div>
        <ScrollTrack />
        <SharingBar />
        <FeedbackButton />
      </div>
      <Taskbar />
    </div>
  );
}
